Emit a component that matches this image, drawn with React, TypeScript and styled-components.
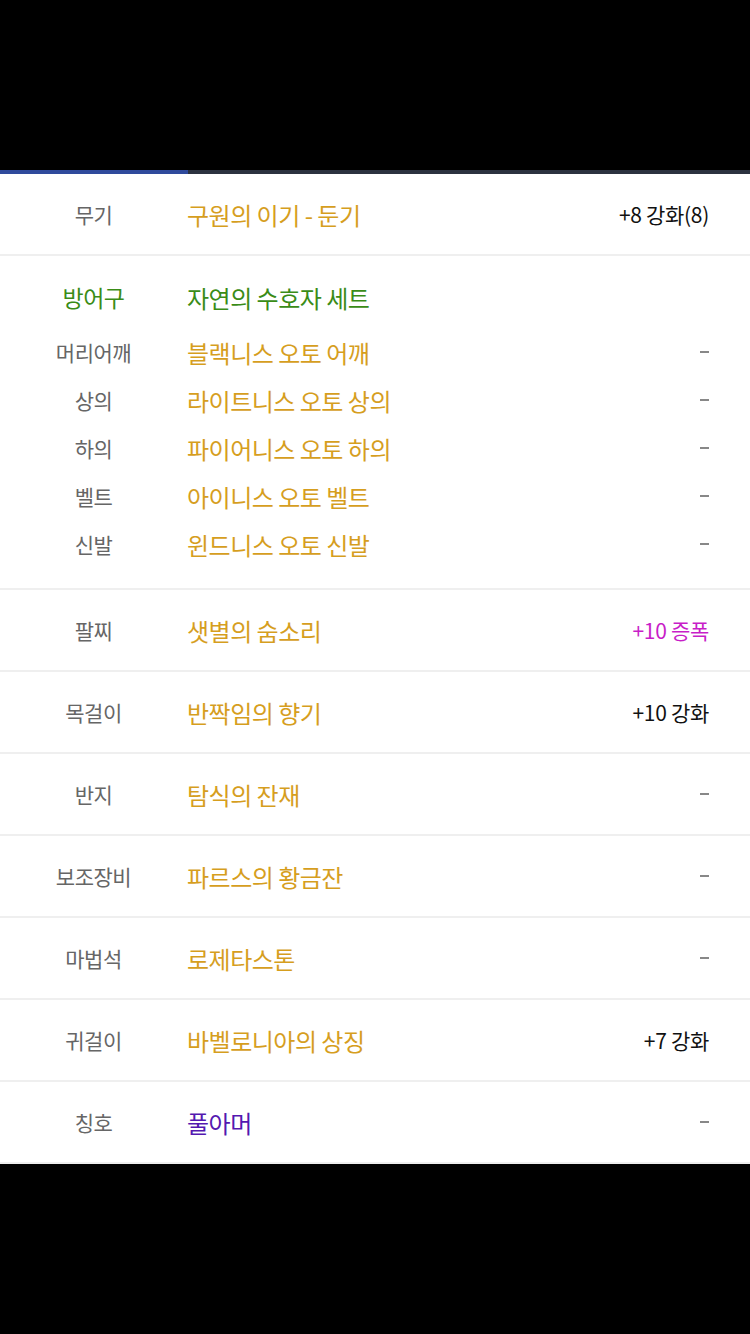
import React from "react";
import styled, { createGlobalStyle } from "styled-components";

const Global = createGlobalStyle`
  html, body { margin: 0; padding: 0; background: #000; }
  body { font-family: "Noto Sans CJK KR", "Noto Sans", sans-serif; }
`;

const Page = styled.div`
  width: 750px;
  min-height: 1334px;
  background: #000;
  display: flex;
  flex-direction: column;
`;

const TopSpace = styled.div`
  height: 170px;
`;

const Progress = styled.div`
  height: 4px;
  background: #2c3240;
  display: flex;
`;

const ProgressFill = styled.div`
  background: #2f4a9c;
  height: 100%;
`;

const List = styled.div`
  background: #fff;
  display: flex;
  flex-direction: column;
`;

const Section = styled.div<{ $pad?: boolean }>`
  border-bottom: 2px solid #efefef;
  display: flex;
  flex-direction: column;
  padding: ${(p) => (p.$pad ? "17px 0 20px" : "0")};
`;

const Row = styled.div<{ $h: number; $mb?: number }>`
  height: ${(p) => p.$h}px;
  margin-bottom: ${(p) => p.$mb ?? 0}px;
  display: grid;
  grid-template-columns: 187px 1fr auto;
  align-items: center;
  padding-right: 41px;
`;

const Label = styled.div<{ $color?: string; $size?: number }>`
  text-align: center;
  color: ${(p) => p.$color ?? "#666"};
  font-size: ${(p) => p.$size ?? 21}px;
  letter-spacing: -0.5px;
`;

const Name = styled.div<{ $color: string }>`
  color: ${(p) => p.$color};
  font-size: 24px;
  letter-spacing: -0.5px;
  white-space: nowrap;
`;

const Value = styled.div<{ $color?: string }>`
  color: ${(p) => p.$color ?? "#111"};
  font-size: 21px;
  letter-spacing: -0.3px;
  text-align: right;
  white-space: nowrap;
`;

const Dash = styled.div`
  width: 9px;
  height: 2px;
  background: #888;
`;

const GOLD = "#d69e1e";
const GREEN = "#3a8c17";
const PURPLE = "#5418b0";

type Item = { label: string; name: string; color: string; value?: string; valueColor?: string };

const armor: Item[] = [
  { label: "머리어깨", name: "블랙니스 오토 어깨", color: GOLD },
  { label: "상의", name: "라이트니스 오토 상의", color: GOLD },
  { label: "하의", name: "파이어니스 오토 하의", color: GOLD },
  { label: "벨트", name: "아이니스 오토 벨트", color: GOLD },
  { label: "신발", name: "윈드니스 오토 신발", color: GOLD },
];

const others: Item[] = [
  { label: "팔찌", name: "샛별의 숨소리", color: GOLD, value: "+10 증폭", valueColor: "#c81ec8" },
  { label: "목걸이", name: "반짝임의 향기", color: GOLD, value: "+10 강화" },
  { label: "반지", name: "탐식의 잔재", color: GOLD },
  { label: "보조장비", name: "파르스의 황금잔", color: GOLD },
  { label: "마법석", name: "로제타스톤", color: GOLD },
  { label: "귀걸이", name: "바벨로니아의 상징", color: GOLD, value: "+7 강화" },
  { label: "칭호", name: "풀아머", color: PURPLE },
];

const Right = ({ item }: { item: Item }) =>
  item.value ? <Value $color={item.valueColor}>{item.value}</Value> : <Dash />;

export default function App() {
  return (
    <Page>
      <Global />
      <TopSpace />
      <Progress>
        <ProgressFill style={{ width: "188px" }} />
      </Progress>
      <List>
        <Section>
          <Row $h={80}>
            <Label>무기</Label>
            <Name $color={GOLD}>구원의 이기 - 둔기</Name>
            <Value>+8 강화(8)</Value>
          </Row>
        </Section>
        <Section $pad>
          <Row $h={48} $mb={7}>
            <Label $color={GREEN} $size={23}>방어구</Label>
            <Name $color={GREEN}>자연의 수호자 세트</Name>
            <span />
          </Row>
          {armor.map((a) => (
            <Row $h={48} key={a.label}>
              <Label>{a.label}</Label>
              <Name $color={a.color}>{a.name}</Name>
              <Right item={a} />
            </Row>
          ))}
        </Section>
        {others.map((o) => (
          <Section key={o.label}>
            <Row $h={80}>
              <Label>{o.label}</Label>
              <Name $color={o.color}>{o.name}</Name>
              <Right item={o} />
            </Row>
          </Section>
        ))}
      </List>
    </Page>
  );
}
